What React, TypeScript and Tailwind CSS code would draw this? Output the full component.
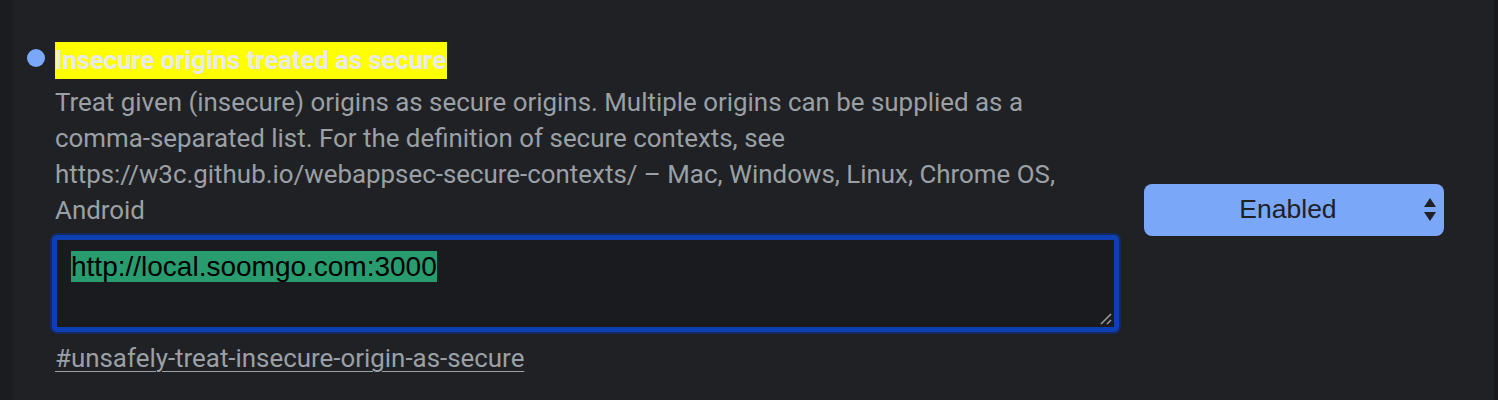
import React from "react";

export default function App() {
  return (
    <div className="flex h-[400px] w-[1498px] overflow-hidden bg-[#202124]">
      <div className="h-full w-[13px] shrink-0 bg-[#1b1c1f]" />
      <div className="flex flex-1 items-start pl-[14px] pr-[50px] pt-[42px]">
        <div className="flex flex-1 items-start">
          <div className="mt-[7px] h-[18px] w-[18px] shrink-0 rounded-full bg-[#7ba7f9]" />
          <div className="ml-[10px] w-[1066px] font-['Roboto',sans-serif]">
            <div className="inline-block h-[37px] bg-[#ffff00] pr-[1px] text-[25.6px] font-bold leading-[37px] text-[#e8eaed]">
              Insecure origins treated as secure
            </div>
            <p className="mt-[5px] text-[25.9px] leading-[36px] text-[#9aa0a6]">
              Treat given (insecure) origins as secure origins. Multiple origins can be supplied as a
              comma-separated list. For the definition of secure contexts, see
              https://w3c.github.io/webappsec-secure-contexts/ – Mac, Windows, Linux, Chrome OS, Android
            </p>
            <div className="relative mt-[7px] h-[97px] w-[1067px] -ml-[3px] rounded-[5px] border-[5px] border-[#0e3fb4] bg-[#1a1b1e] pl-[14px] pt-[11px] shadow-[0_0_0_2px_#152a5c]">
              <span className="bg-[#289c6f] font-['Liberation_Sans',Arial,sans-serif] text-[28px] leading-[32px] text-black">
                http://local.soomgo.com:3000
              </span>
              <svg className="absolute bottom-[1px] right-[1px]" width="14" height="14" viewBox="0 0 14 14">
                <line x1="2" y1="12" x2="12" y2="2" stroke="#9a9a9a" strokeWidth="1.6" />
                <line x1="8" y1="12" x2="12" y2="8" stroke="#9a9a9a" strokeWidth="1.6" />
              </svg>
            </div>
            <div className="mt-[11px]">
              <a className="text-[25.9px] leading-[30px] text-[#9aa0a6] underline decoration-1 underline-offset-[4px]">
                #unsafely-treat-insecure-origin-as-secure
              </a>
            </div>
          </div>
        </div>
        <div className="relative mt-[142px] flex h-[52px] w-[300px] shrink-0 items-center justify-center rounded-[8px] bg-[#7ba7f9] pr-[12px]">
          <span className="font-['Liberation_Sans',Arial,sans-serif] text-[26.5px] text-[#202124]">Enabled</span>
          <svg className="absolute right-[8px] top-[14px]" width="12" height="24" viewBox="0 0 12 24">
            <polygon points="6,0 12,9 0,9" fill="#202124" />
            <polygon points="0,14 12,14 6,23" fill="#202124" />
          </svg>
        </div>
      </div>
      <div className="h-full w-[4px] shrink-0 bg-[#19191b]" />
    </div>
  );
}
